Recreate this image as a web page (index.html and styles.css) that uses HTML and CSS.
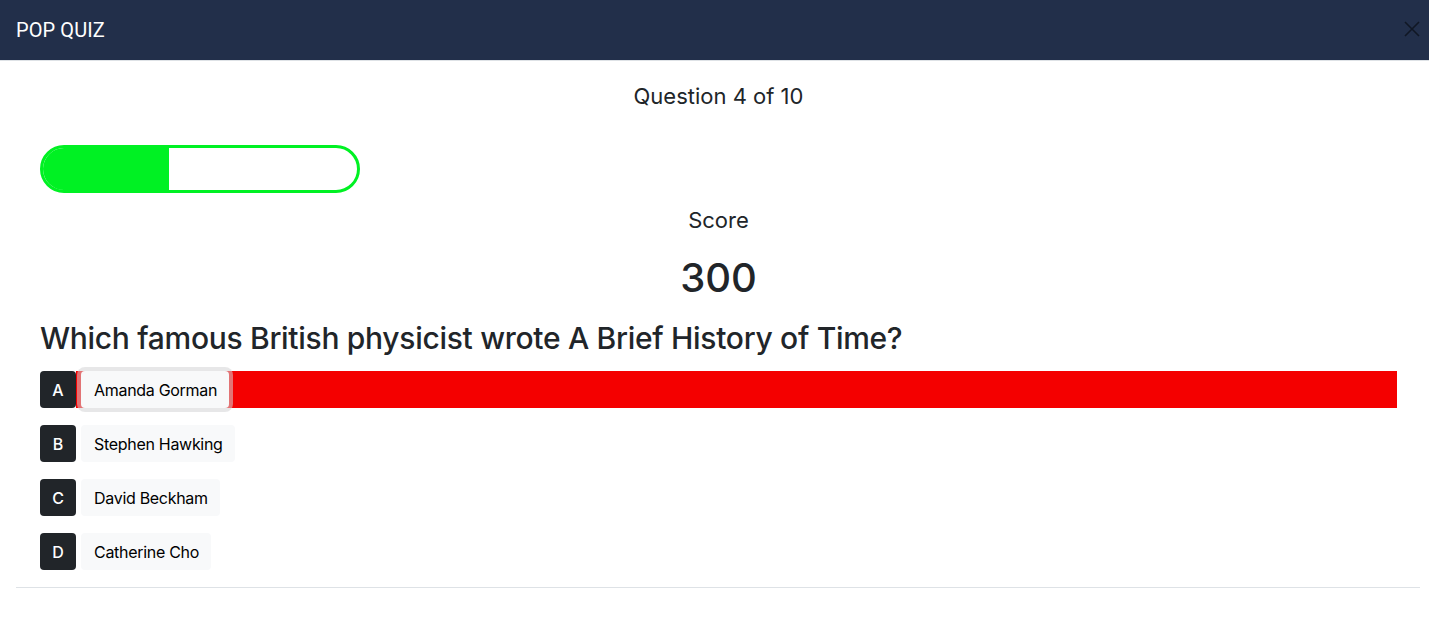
FILE: index.html
```html
<!DOCTYPE html>
<html lang="en">
<head>
<meta charset="utf-8">
<title>Pop Quiz</title>
<link rel="stylesheet" href="styles.css">
</head>
<body>
<div class="modal">
  <header class="modal-header">
    <h1 class="modal-title">POP QUIZ</h1>
    <button class="btn-close" aria-label="Close">
      <svg width="16" height="16" viewBox="0 0 16 16"><path d="M1 1L15 15M15 1L1 15" stroke="#000" stroke-width="1.6" fill="none"/></svg>
    </button>
  </header>
  <main class="modal-body">
    <div class="quiz">
      <div class="qnum">Question 4 of 10</div>
      <div class="progress"><div class="progress-fill" style="width:40%"></div></div>
      <div class="score-label">Score</div>
      <div class="score">300</div>
      <h2 class="question">Which famous British physicist wrote A Brief History of Time?</h2>
      <ul class="answers">
        <li class="answer wrong"><span class="letter">A</span><button class="choice focused">Amanda Gorman</button></li>
        <li class="answer"><span class="letter">B</span><button class="choice">Stephen Hawking</button></li>
        <li class="answer"><span class="letter">C</span><button class="choice">David Beckham</button></li>
        <li class="answer"><span class="letter">D</span><button class="choice">Catherine Cho</button></li>
      </ul>
    </div>
    <hr class="divider">
  </main>
</div>
</body>
</html>
```

FILE: styles.css
```css
* { box-sizing: border-box; }
html, body { margin: 0; padding: 0; background: #fff; }
body {
  font-family: Inter, "Noto Sans", "Liberation Sans", sans-serif;
  color: #212529;
}
.modal-header {
  height: 61px;
  background: #222f4a;
  border-bottom: 1px solid #dee2e6;
  display: flex;
  align-items: center;
  justify-content: space-between;
  padding: 0 9px 0 16px;
}
.modal-title {
  margin: 0;
  font-family: Roboto, "Liberation Sans", sans-serif;
  font-weight: 400;
  font-size: 20px;
  color: #fff;
  letter-spacing: 0.1px;
}
.btn-close {
  background: none;
  border: 0;
  padding: 0;
  width: 16px;
  height: 16px;
  opacity: 0.5;
  display: block;
  margin-top: -2px;
}
.btn-close svg { display: block; }
.modal-body {
  padding: 16px 9px 0 16px;
}
.quiz {
  padding: 0 23px 0 24px;
}
.qnum {
  text-align: center;
  font-size: 22px;
  line-height: 26px;
  margin-top: 6px;
}
.progress {
  width: 320px;
  height: 48px;
  border: 3px solid #00f123;
  border-radius: 24px;
  overflow: hidden;
  margin-top: 36px;
  background: #fff;
}
.progress-fill {
  height: 100%;
  background: #00f123;
}
.score-label {
  text-align: center;
  font-size: 22px;
  line-height: 26px;
  margin-top: 14px;
}
.score {
  text-align: center;
  font-size: 40px;
  font-weight: 500;
  line-height: 48px;
  margin-top: 21px;
}
.question {
  margin: 18px 0 0;
  font-size: 30px;
  font-weight: 500;
  line-height: 36px;
  letter-spacing: -0.3px;
}
.answers {
  list-style: none;
  margin: 15px 0 0;
  padding: 0;
  display: flex;
  flex-direction: column;
  gap: 17px;
}
.answer {
  display: flex;
  align-items: stretch;
  height: 37px;
}
.answer.wrong { background: linear-gradient(to right, transparent 36px, #f40000 36px); }
.letter {
  width: 36px;
  background: #212529;
  color: #fff;
  border-radius: 4px;
  display: flex;
  align-items: center;
  justify-content: center;
  font-size: 16px;
  font-weight: 500;
}
.choice {
  margin-left: 5px;
  background: #f8f9fa;
  border: 0;
  border-radius: 4px;
  padding: 0 12px 0 13px;
  font-family: Inter, "Noto Sans", "Liberation Sans", sans-serif;
  font-size: 16px;
  letter-spacing: -0.3px;
  color: #000;
}
.choice.focused {
  box-shadow: 0 0 0 4px rgba(211, 212, 213, 0.55);
}
.divider {
  border: 0;
  border-top: 1px solid #dee2e6;
  margin: 17px 0 0;
}
```
